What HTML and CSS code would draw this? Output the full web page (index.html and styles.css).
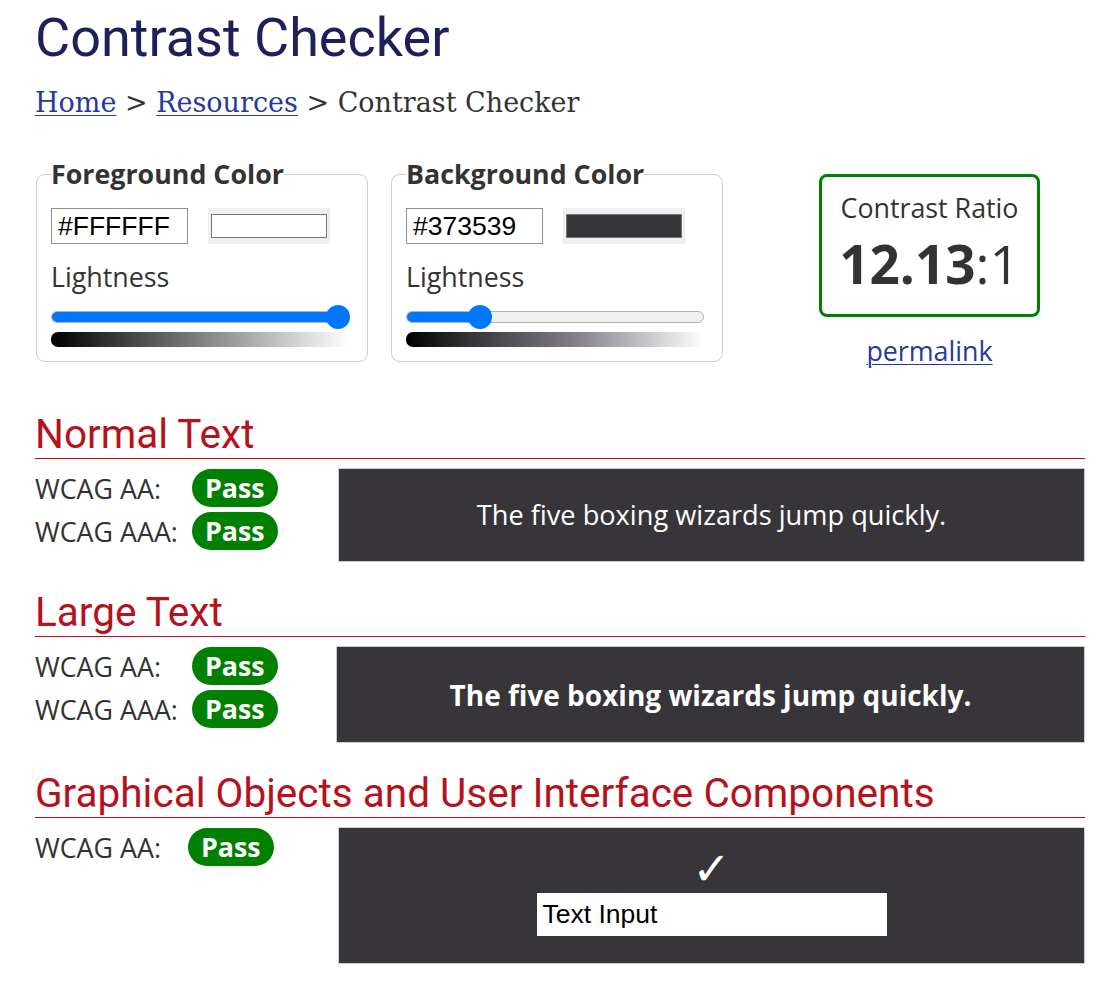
FILE: index.html
```html
<!DOCTYPE html>
<html lang="en">
<head>
<meta charset="utf-8">
<title>Contrast Checker</title>
<link rel="stylesheet" href="styles.css">
</head>
<body>
<main class="page">
  <h1 class="title">Contrast Checker</h1>
  <nav class="crumbs"><a href="#">Home</a> &gt; <a href="#">Resources</a> &gt; Contrast Checker</nav>

  <div class="picker-row">
    <fieldset class="picker">
      <legend>Foreground Color</legend>
      <div class="hex-row">
        <div class="hex">#FFFFFF</div>
        <div class="swatch"><div class="swatch-inner swatch-fg"></div></div>
      </div>
      <div class="label">Lightness</div>
      <div class="slider">
        <div class="track"><div class="fill" style="width:100%"></div></div>
        <div class="thumb" style="left:275px"></div>
      </div>
      <div class="gradient gradient-fg"></div>
    </fieldset>

    <fieldset class="picker">
      <legend>Background Color</legend>
      <div class="hex-row">
        <div class="hex">#373539</div>
        <div class="swatch"><div class="swatch-inner swatch-bg"></div></div>
      </div>
      <div class="label">Lightness</div>
      <div class="slider">
        <div class="track"><div class="fill" style="width:25%"></div></div>
        <div class="thumb" style="left:62px"></div>
      </div>
      <div class="gradient gradient-bg"></div>
    </fieldset>

    <div class="ratio-col">
      <div class="ratio-box">
        <div class="ratio-label">Contrast Ratio</div>
        <div class="ratio-value"><b>12.13</b>:1</div>
      </div>
      <a class="permalink" href="#">permalink</a>
    </div>
  </div>

  <section class="result result-first">
    <h2>Normal Text</h2>
    <div class="result-body">
      <div class="checks">
        <div class="check"><span class="check-label">WCAG AA:</span><span class="pass">Pass</span></div>
        <div class="check"><span class="check-label">WCAG AAA:</span><span class="pass">Pass</span></div>
      </div>
      <div class="sample sample-normal">The five boxing wizards jump quickly.</div>
    </div>
  </section>

  <section class="result">
    <h2>Large Text</h2>
    <div class="result-body">
      <div class="checks checks-large">
        <div class="check"><span class="check-label">WCAG AA:</span><span class="pass">Pass</span></div>
        <div class="check"><span class="check-label">WCAG AAA:</span><span class="pass">Pass</span></div>
      </div>
      <div class="sample sample-large">The five boxing wizards jump quickly.</div>
    </div>
  </section>

  <section class="result">
    <h2>Graphical Objects and User Interface Components</h2>
    <div class="result-body">
      <div class="checks checks-ui">
        <div class="check"><span class="check-label label-ui">WCAG AA:</span><span class="pass">Pass</span></div>
      </div>
      <div class="sample sample-ui">
        <div class="tick">&#10003;</div>
        <div class="text-input">Text Input</div>
      </div>
    </div>
  </section>
</main>
</body>
</html>
```

FILE: styles.css
```css
* { box-sizing: border-box; }

body {
  margin: 0;
  background: #fff;
  color: #333;
  font-family: "Open Sans", "Noto Sans", sans-serif;
  font-size: 26.8px;
}

.page {
  width: 1085px;
  padding: 5px 0 0 35px;
}

.title {
  margin: 0;
  font-family: Roboto, "Open Sans", sans-serif;
  font-weight: 400;
  font-size: 54px;
  line-height: 65px;
  color: #1e205c;
}

.crumbs {
  margin-top: 18px;
  font-family: "DejaVu Serif", "Liberation Serif", serif;
  font-size: 27px;
  line-height: 30px;
  color: #333;
}

.crumbs a, .permalink {
  color: #27399b;
  text-decoration: underline;
  text-decoration-thickness: 1px;
  text-underline-offset: 3px;
}

.picker-row {
  display: flex;
  align-items: flex-start;
  margin-top: 38px;
}

.picker {
  width: 332px;
  margin: 0 0 0 1px;
  padding: 16px 16px 14px 14px;
  border: 1px solid #cccccc;
  border-radius: 9px;
  min-width: 0;
}
.picker + .picker { margin-left: 23px; }

.picker legend {
  padding: 0;
  font-weight: 700;
  line-height: 36px;
  color: #333;
}

.hex-row {
  display: flex;
  align-items: center;
}

.hex {
  width: 137px;
  height: 36px;
  border: 1px solid #8f8f8f;
  padding-left: 6px;
  font-family: "Liberation Sans", Arial, sans-serif;
  font-size: 26.5px;
  line-height: 34px;
  color: #000;
}

.swatch {
  width: 122px;
  height: 36px;
  margin-left: 20px;
  background: #efefef;
  padding: 6px 3px;
}
.swatch-inner {
  height: 24px;
  border: 1px solid #767676;
}
.swatch-fg { background: #ffffff; }
.swatch-bg { background: #373539; }

.label {
  margin-top: 15px;
  line-height: 36px;
}

.slider {
  position: relative;
  height: 24px;
  width: 298px;
  margin-top: 10px;
  padding-top: 6px;
}
.track {
  height: 12px;
  border-radius: 6px;
  background: #efefef;
  border: 1px solid #b2b2b2;
  overflow: hidden;
}
.fill {
  background: #0075ff;
  margin: -1px;
  height: 12px;
}
.thumb {
  position: absolute;
  top: 0;
  width: 24px;
  height: 24px;
  border-radius: 50%;
  background: #0075ff;
}

.gradient {
  width: 298px;
  height: 15px;
  margin-top: 3px;
  border-radius: 7px 0 0 7px;
}
.gradient-fg { background: linear-gradient(to right, #000 0%, #fff 100%); }
.gradient-bg { background: linear-gradient(to right, #000 0%, #373539 22%, #7f7a84 55%, #fff 100%); }

.ratio-col {
  margin-left: 96px;
  margin-top: 18px;
  width: 221px;
  display: flex;
  flex-direction: column;
  align-items: center;
}

.ratio-box {
  width: 221px;
  height: 143px;
  border: 3px solid #008000;
  border-radius: 8px;
  padding-top: 13px;
  text-align: center;
}
.ratio-label {
  line-height: 36px;
}
.ratio-value {
  margin-top: 11px;
  font-size: 53px;
  line-height: 53px;
}
.ratio-value b { font-weight: 700; }

.permalink {
  margin-top: 16px;
  line-height: 36px;
}

.result { margin-top: 26px; }
.result-first { margin-top: 41px; }

.result h2 {
  margin: 0;
  font-family: Roboto, "Open Sans", sans-serif;
  font-weight: 400;
  font-size: 40.5px;
  line-height: 48px;
  color: #b5121b;
  border-bottom: 1px solid #b5121b;
}

.result-body {
  display: flex;
  align-items: flex-start;
  margin-top: 9px;
}

.checks {
  width: 303px;
  flex: none;
  padding-top: 1px;
}
.checks-large { width: 301px; }

.check {
  display: flex;
  align-items: center;
  margin-bottom: 5px;
}

.check-label {
  width: 157px;
  flex: none;
}
.label-ui { width: 153px; }

.pass {
  display: inline-block;
  height: 38px;
  line-height: 38px;
  padding: 0 13px;
  border-radius: 19px;
  background: #008000;
  color: #fff;
  font-weight: 700;
}

.sample {
  flex: 1;
  background: #373539;
  border: 1px solid #cccccc;
  color: #fff;
  text-align: center;
}
.sample-normal {
  padding: 28px 10px;
  font-size: 27.2px;
  line-height: 36px;
}
.sample-large {
  padding: 29px 10px 28px;
  font-size: 28px;
  line-height: 38px;
  font-weight: 700;
}
.sample-ui {
  padding: 20px 0 27px;
  display: flex;
  flex-direction: column;
  align-items: center;
}

.tick {
  font-family: "DejaVu Sans", sans-serif;
  font-size: 46px;
  line-height: 42px;
  height: 42px;
  color: #fff;
}

.text-input {
  width: 350px;
  height: 43px;
  margin-top: 3px;
  background: #fff;
  color: #000;
  text-align: left;
  padding-left: 6px;
  font-family: "Liberation Sans", Arial, sans-serif;
  font-size: 26.5px;
  line-height: 43px;
}
```
